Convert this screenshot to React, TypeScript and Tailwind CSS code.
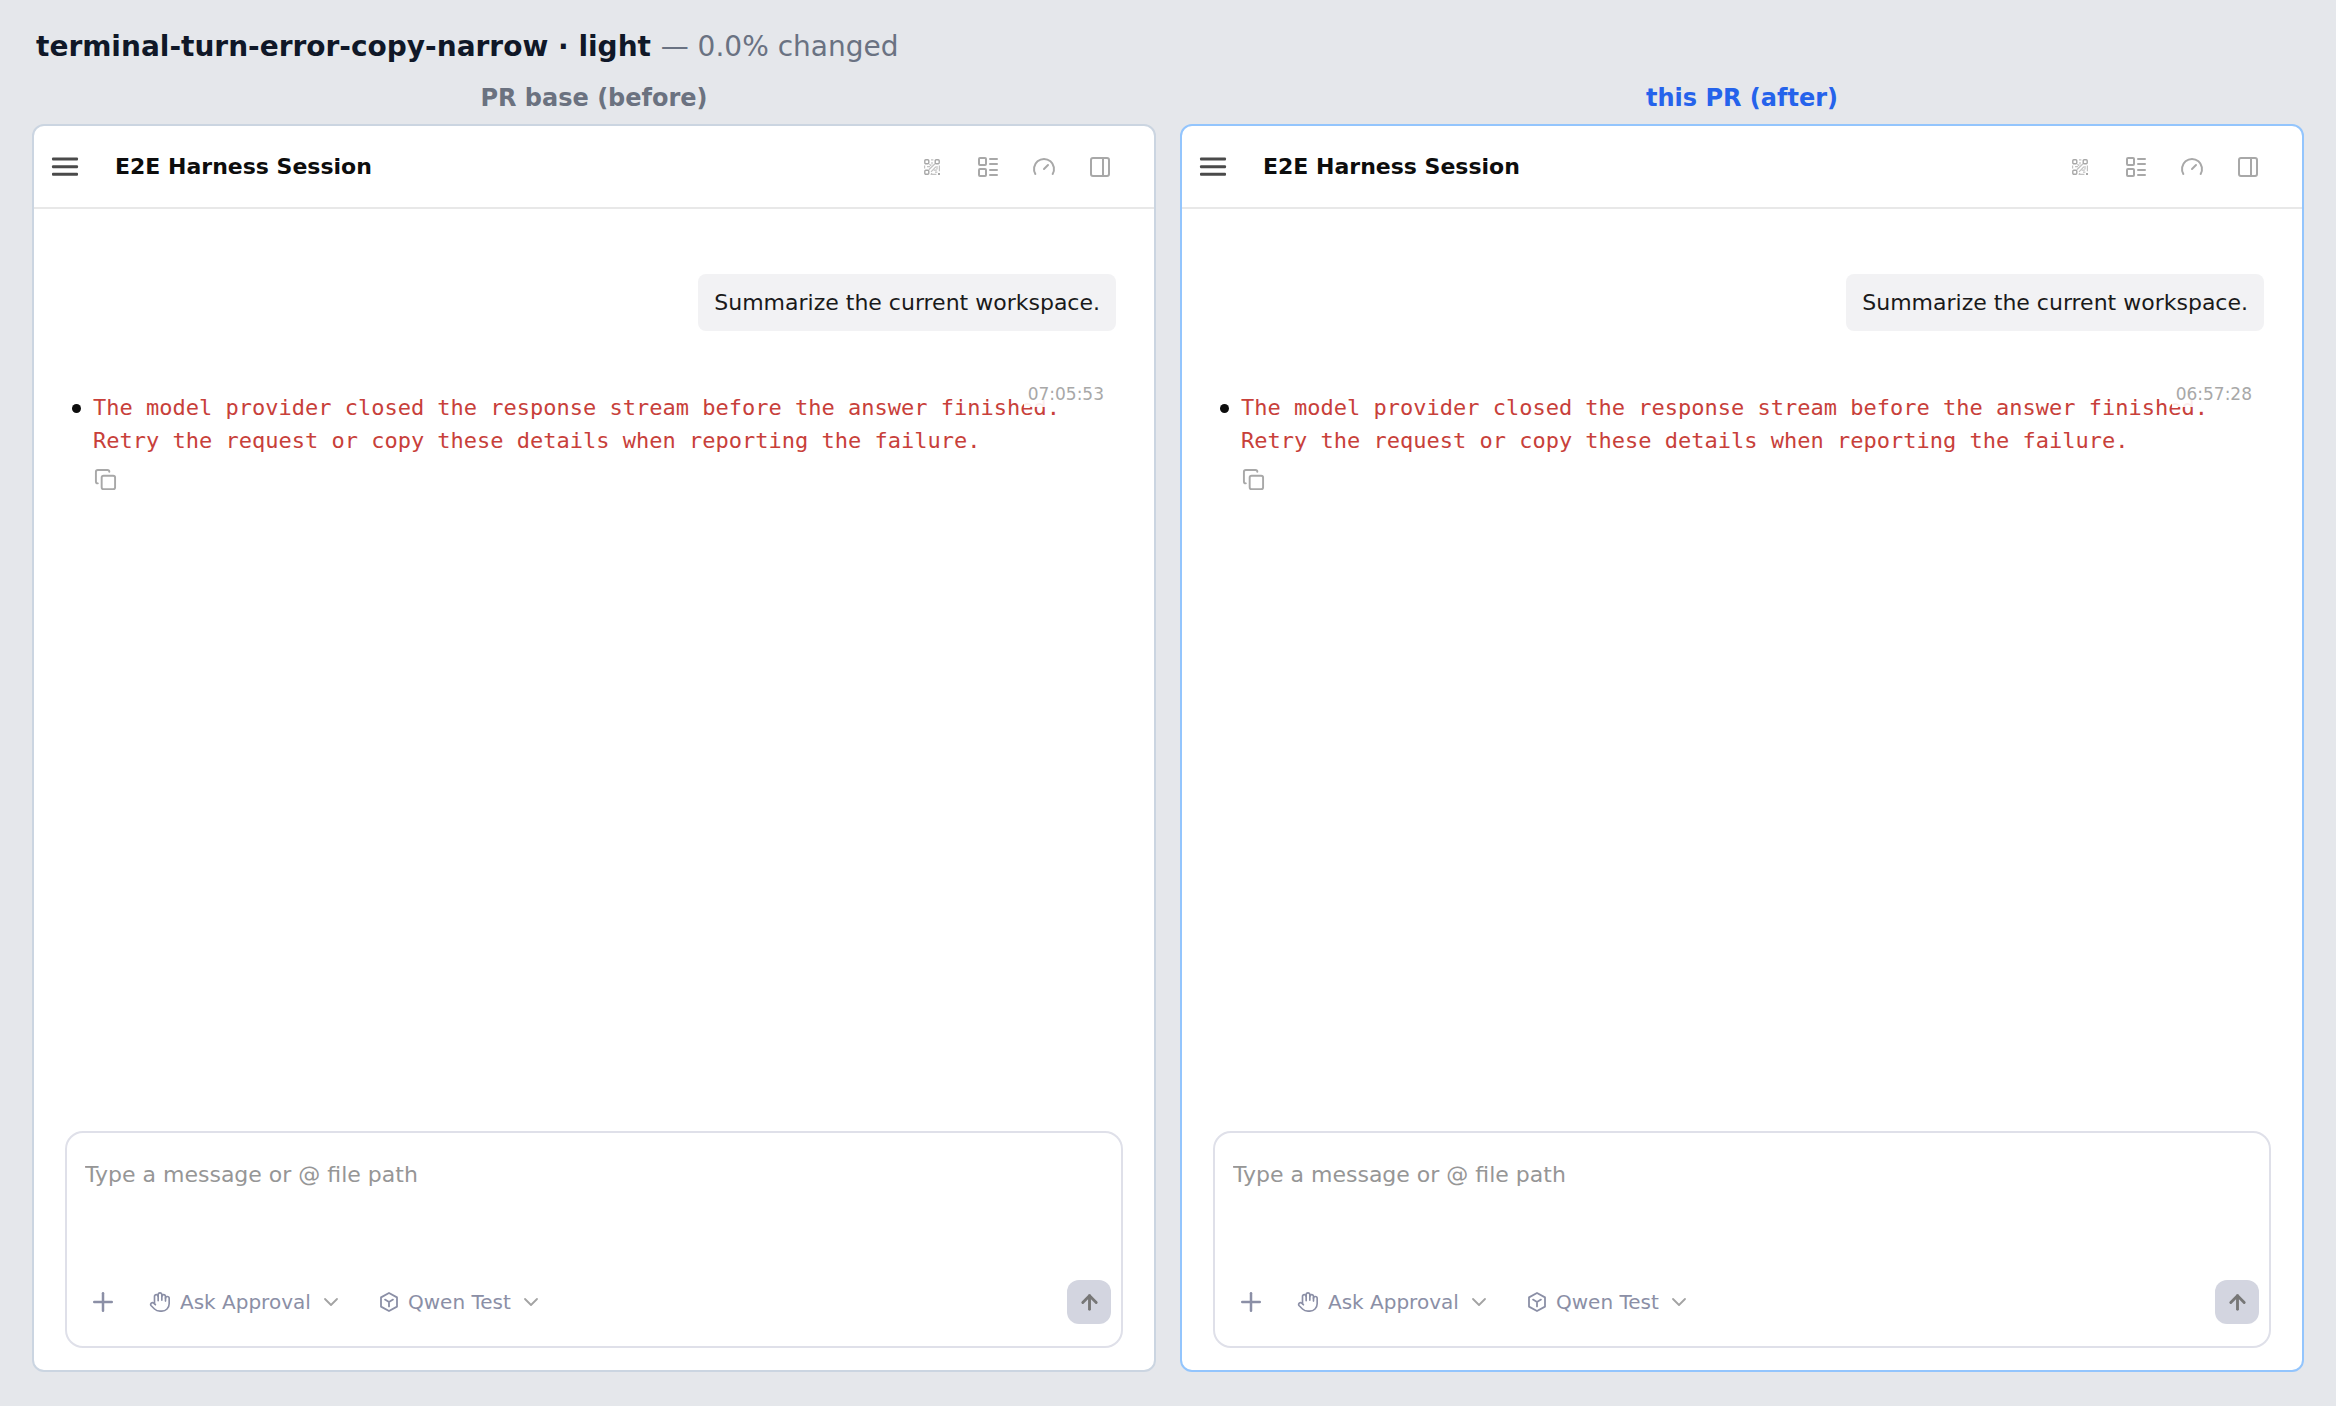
import type { ReactNode } from "react";
import {
  LuArrowUp,
  LuChevronDown,
  LuCopy,
  LuGauge,
  LuHand,
  LuLayoutList,
  LuPanelRight,
  LuPlus,
} from "react-icons/lu";

function MenuIcon() {
  return (
    <svg width="28" height="28" viewBox="0 0 28 28" fill="#4a4a4a">
      <rect x="1" y="4.6" width="26" height="3" rx="1" />
      <rect x="1" y="12.2" width="26" height="3" rx="1" />
      <rect x="1" y="19.8" width="26" height="3" rx="1" />
    </svg>
  );
}

function GraphIcon() {
  return (
    <svg
      width="18"
      height="18"
      viewBox="0 0 18 18"
      fill="none"
      stroke="currentColor"
    >
      <rect x="1.8" y="1.8" width="4" height="4" rx="1" strokeWidth="1.4" />
      <rect x="12.2" y="1.8" width="4" height="4" rx="1" strokeWidth="1.4" />
      <rect x="1.8" y="12.2" width="4" height="4" rx="1" strokeWidth="1.4" />
      <g strokeWidth="1.2" opacity="0.7">
        <path d="M8 1.8h2.4M9 4v2.6M1.6 7.6v2.8M4 8.6h3M16.4 7.6v5.6M14 8v3.4M7.6 16.4h5.8" />
        <path d="M5.8 11.8 12 5.8M8 13.8l5-5.2M6.4 6.2l1.8 1.6" />
        <path d="M10.6 12.2h3.2M12 14.2h2.4M8.6 15v1.4" />
      </g>
      <rect x="15" y="15" width="2" height="2" fill="currentColor" stroke="none" />
    </svg>
  );
}

function ModelIcon() {
  return (
    <svg
      width="20"
      height="22"
      viewBox="0 0 20 22"
      fill="none"
      stroke="currentColor"
      strokeWidth="1.8"
      strokeLinecap="round"
      strokeLinejoin="round"
    >
      <path d="M10 2 18 6.4v9.2L10 20l-8-4.4V6.4z" />
      <path d="M6 8.6 10 11l4-2.4M10 11v4.4" />
    </svg>
  );
}

function HeaderButton({ label, children }: { label: string; children: ReactNode }) {
  return (
    <button
      type="button"
      aria-label={label}
      className="flex size-12 items-center justify-center text-[#a8a8a8]"
    >
      {children}
    </button>
  );
}

function Picker({ label, value, icon }: { label: string; value: string; icon: ReactNode }) {
  return (
    <label className="relative flex items-center gap-[9px] text-[#8b8fa6]">
      {icon}
      <select
        aria-label={label}
        className="appearance-none bg-transparent pr-8 text-[20px] leading-8"
      >
        <option>{value}</option>
      </select>
      <LuChevronDown
        size={24}
        strokeWidth={1.8}
        className="pointer-events-none absolute right-0 text-[#a3a3a3]"
      />
    </label>
  );
}

function Composer() {
  return (
    <form
      onSubmit={(e) => e.preventDefault()}
      className="mx-[31px] mb-[22px] flex flex-col rounded-[18px] border-2 border-[#dfe0e9] px-[18px] pt-[25px] pb-[22px]"
    >
      <textarea
        aria-label="Message"
        placeholder="Type a message or @ file path"
        className="block h-[122px] w-full resize-none text-[22px] leading-[33px] outline-none placeholder:text-[#969696]"
      />
      <div className="-mr-2 flex items-center">
        <button
          type="button"
          aria-label="Add"
          className="mr-7 flex size-9 items-center justify-center text-[#8b8fa6]"
        >
          <LuPlus size={30} strokeWidth={2} />
        </button>
        <Picker
          label="Approval mode"
          value="Ask Approval"
          icon={<LuHand size={22} strokeWidth={1.8} />}
        />
        <div className="ml-9">
          <Picker label="Model" value="Qwen Test" icon={<ModelIcon />} />
        </div>
        <button
          type="submit"
          aria-label="Send"
          className="ml-auto flex size-11 items-center justify-center rounded-xl bg-[#d3d5e0] text-[#777]"
        >
          <LuArrowUp size={23} strokeWidth={3} />
        </button>
      </div>
    </form>
  );
}

function Session({ time, frame }: { time: string; frame: string }) {
  return (
    <section
      className={`flex flex-1 flex-col overflow-hidden rounded-xl border-2 bg-white ${frame}`}
    >
      <header className="flex h-[83px] shrink-0 items-center border-b-2 border-[#e8e8e8] pr-[30px] pl-[17px]">
        <button type="button" aria-label="Menu">
          <MenuIcon />
        </button>
        <h2 className="ml-9 text-[22px] leading-[33px] font-bold text-[#0d0d0d]">
          E2E Harness Session
        </h2>
        <div className="ml-auto flex gap-2">
          <HeaderButton label="Graph">
            <GraphIcon />
          </HeaderButton>
          <HeaderButton label="Tasks">
            <LuLayoutList size={24} />
          </HeaderButton>
          <HeaderButton label="Usage">
            <LuGauge size={24} />
          </HeaderButton>
          <HeaderButton label="Panel">
            <LuPanelRight size={24} />
          </HeaderButton>
        </div>
      </header>

      <main className="flex flex-1 flex-col px-[38px] pt-[65px]">
        <p className="self-end rounded-lg bg-[#f2f2f4] px-4 py-3 text-[22px] leading-[33px] text-[#1a1a1a]">
          Summarize the current workspace.
        </p>
        <div className="relative mt-[60px] flex">
          <span className="mt-[13px] size-[9px] shrink-0 rounded-full bg-[#0d0d0d]" />
          <div className="ml-3">
            <p className="font-['DejaVu_Sans_Mono',monospace] text-[22px] leading-[33px] text-[#c8403a]">
              The model provider closed the response stream before the answer finished.
              <br />
              Retry the request or copy these details when reporting the failure.
            </p>
            <button
              type="button"
              aria-label="Copy details"
              className="mt-1 flex size-9 items-center pl-px text-[#a8a8a8]"
            >
              <LuCopy size={23} />
            </button>
          </div>
          <time className="absolute -top-[10px] right-2 bg-white/90 px-1 text-[17px] leading-[26px] text-[#a8a8a8]">
            {time}
          </time>
        </div>
      </main>

      <Composer />
    </section>
  );
}

export default function App() {
  return (
    <div className="flex min-h-screen flex-col bg-[#e5e7eb] px-8 pt-[29px] pb-[34px] font-['DejaVu_Sans',sans-serif]">
      <h1 className="px-1 text-[28px] leading-9 font-bold text-gray-900">
        terminal-turn-error-copy-narrow · light{" "}
        <span className="font-normal text-gray-500">— 0.0% changed</span>
      </h1>
      <div className="mt-[17px] grid flex-1 grid-cols-2 gap-6">
        <div className="flex flex-col gap-[10px]">
          <p className="text-center text-[24px] leading-8 font-bold text-[#6b7280]">
            PR base (before)
          </p>
          <Session time="07:05:53" frame="border-[#cbd5e1]" />
        </div>
        <div className="flex flex-col gap-[10px]">
          <p className="text-center text-[24px] leading-8 font-bold text-[#2563eb]">
            this PR (after)
          </p>
          <Session time="06:57:28" frame="border-[#93c5fd]" />
        </div>
      </div>
    </div>
  );
}
